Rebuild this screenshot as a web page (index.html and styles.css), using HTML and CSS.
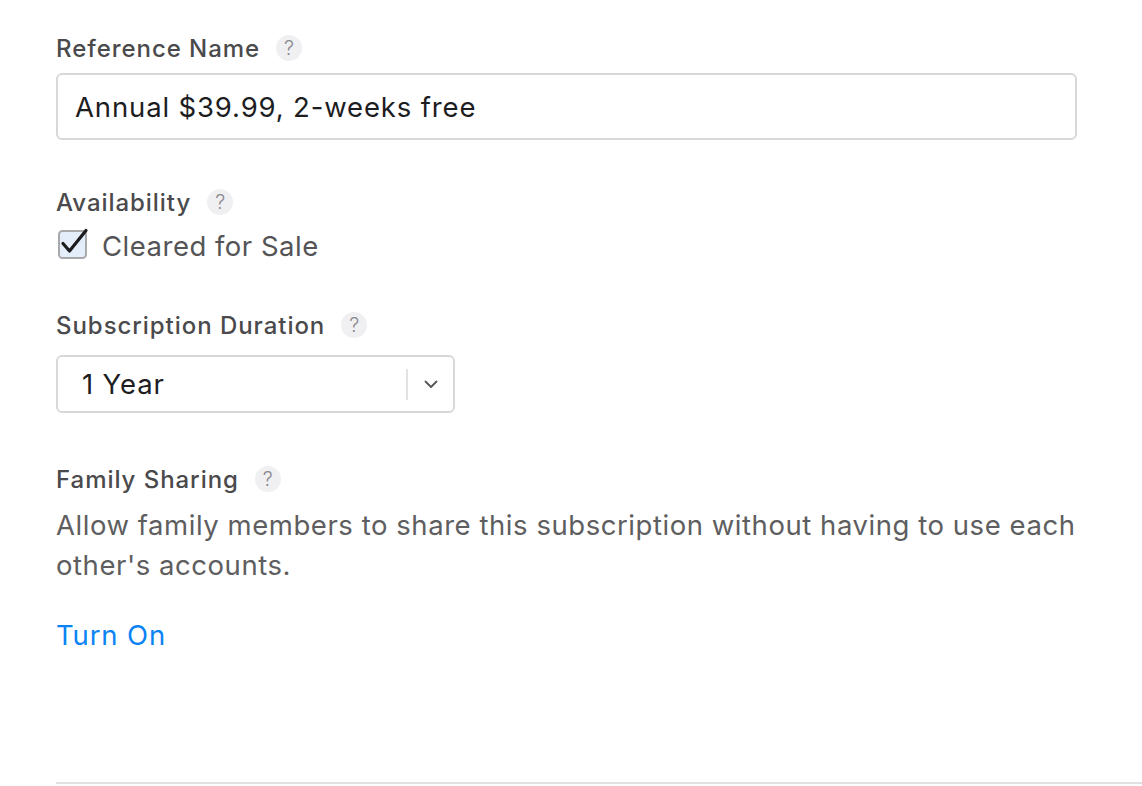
FILE: index.html
```html
<!DOCTYPE html>
<html lang="en">
<head>
<meta charset="utf-8">
<title>Subscription</title>
<link rel="stylesheet" href="styles.css">
</head>
<body>
<div class="page">
  <div class="field field-first">
    <div class="label-row"><span class="label">Reference Name</span><span class="help">?</span></div>
    <div class="input">Annual $39.99, 2-weeks free</div>
  </div>

  <div class="field field-avail">
    <div class="label-row"><span class="label">Availability</span><span class="help">?</span></div>
    <div class="check-row">
      <svg class="checkbox" width="34" height="34" viewBox="0 0 34 34">
        <rect x="3" y="4" width="27" height="27" rx="3.5" fill="#e4eefb" stroke="#a9a9ab" stroke-width="2"/>
        <path d="M7 16.5 L13.5 24 L30 3.5" fill="none" stroke="#1c1c1e" stroke-width="3.2" stroke-linecap="round" stroke-linejoin="round"/>
      </svg>
      <span class="check-label">Cleared for Sale</span>
    </div>
  </div>

  <div class="field field-duration">
    <div class="label-row"><span class="label">Subscription Duration</span><span class="help">?</span></div>
    <div class="select">
      <span class="select-value">1 Year</span>
      <span class="select-divider"></span>
      <svg class="chevron" width="14" height="9" viewBox="0 0 14 9">
        <path d="M1.5 1.5 L7 7 L12.5 1.5" fill="none" stroke="#555" stroke-width="1.8" stroke-linecap="round" stroke-linejoin="round"/>
      </svg>
    </div>
  </div>

  <div class="field field-family">
    <div class="label-row"><span class="label">Family Sharing</span><span class="help">?</span></div>
    <p class="desc">Allow family members to share this subscription without having to use each other's accounts.</p>
    <a class="link" href="#">Turn On</a>
  </div>
</div>
<div class="divider"></div>
</body>
</html>
```

FILE: styles.css
```css
html, body {
  margin: 0;
  padding: 0;
  background: #ffffff;
}

body {
  font-family: Inter, "Noto Sans", "Liberation Sans", sans-serif;
  width: 1142px;
  height: 786px;
  overflow: hidden;
}

.page {
  padding-left: 56px;
  width: 1021px;
}

.field {
  display: flex;
  flex-direction: column;
  align-items: flex-start;
}

.field-first { padding-top: 32px; }
.field-avail { margin-top: 46px; }
.field-duration { margin-top: 43px; }
.field-family { margin-top: 50px; }

.label-row {
  display: flex;
  align-items: center;
  height: 32px;
}

.label {
  font-size: 24px;
  font-weight: 500;
  color: #4a4a4c;
  letter-spacing: 0.95px;
}

.help {
  width: 26px;
  height: 26px;
  border-radius: 50%;
  background: #f0f0f2;
  color: #8b8b90;
  font-size: 20px;
  font-weight: 300;
  display: flex;
  align-items: center;
  justify-content: center;
  margin-left: 16px;
}

.input {
  margin-top: 9px;
  box-sizing: border-box;
  width: 1021px;
  height: 67px;
  border: 2px solid #d8d8da;
  border-radius: 6px;
  padding-left: 17px;
  display: flex;
  align-items: center;
  font-size: 27.5px;
  letter-spacing: 0.85px;
  color: #1d1d1f;
}

.check-row {
  margin-top: 8px;
  height: 40px;
  display: flex;
  align-items: center;
}

.checkbox {
  margin-left: 0;
  margin-top: -4px;
}

.check-label {
  margin-left: 12px;
  font-size: 27.5px;
  letter-spacing: 0.5px;
  color: #545456;
}

.select {
  margin-top: 14px;
  box-sizing: border-box;
  width: 399px;
  height: 58px;
  border: 2px solid #d8d8da;
  border-radius: 6px;
  display: flex;
  align-items: center;
  padding-left: 24px;
}

.select-value {
  flex: 1;
  font-size: 27.5px;
  letter-spacing: 0.85px;
  color: #1d1d1f;
}

.select-divider {
  width: 2px;
  height: 31px;
  background: #e2e2e4;
}

.chevron {
  margin: 0 15px 0 16px;
}

.desc {
  margin: 10px 0 0 0;
  width: 1050px;
  font-size: 27.5px;
  letter-spacing: 0.55px;
  line-height: 40px;
  color: #5e5e60;
}

.link {
  margin-top: 30px;
  font-size: 27.5px;
  letter-spacing: 0.85px;
  line-height: 40px;
  color: #0a84f5;
  text-decoration: none;
}

.divider {
  margin-top: 127px;
  margin-left: 56px;
  height: 2px;
  background: #e1e1e3;
}
```
